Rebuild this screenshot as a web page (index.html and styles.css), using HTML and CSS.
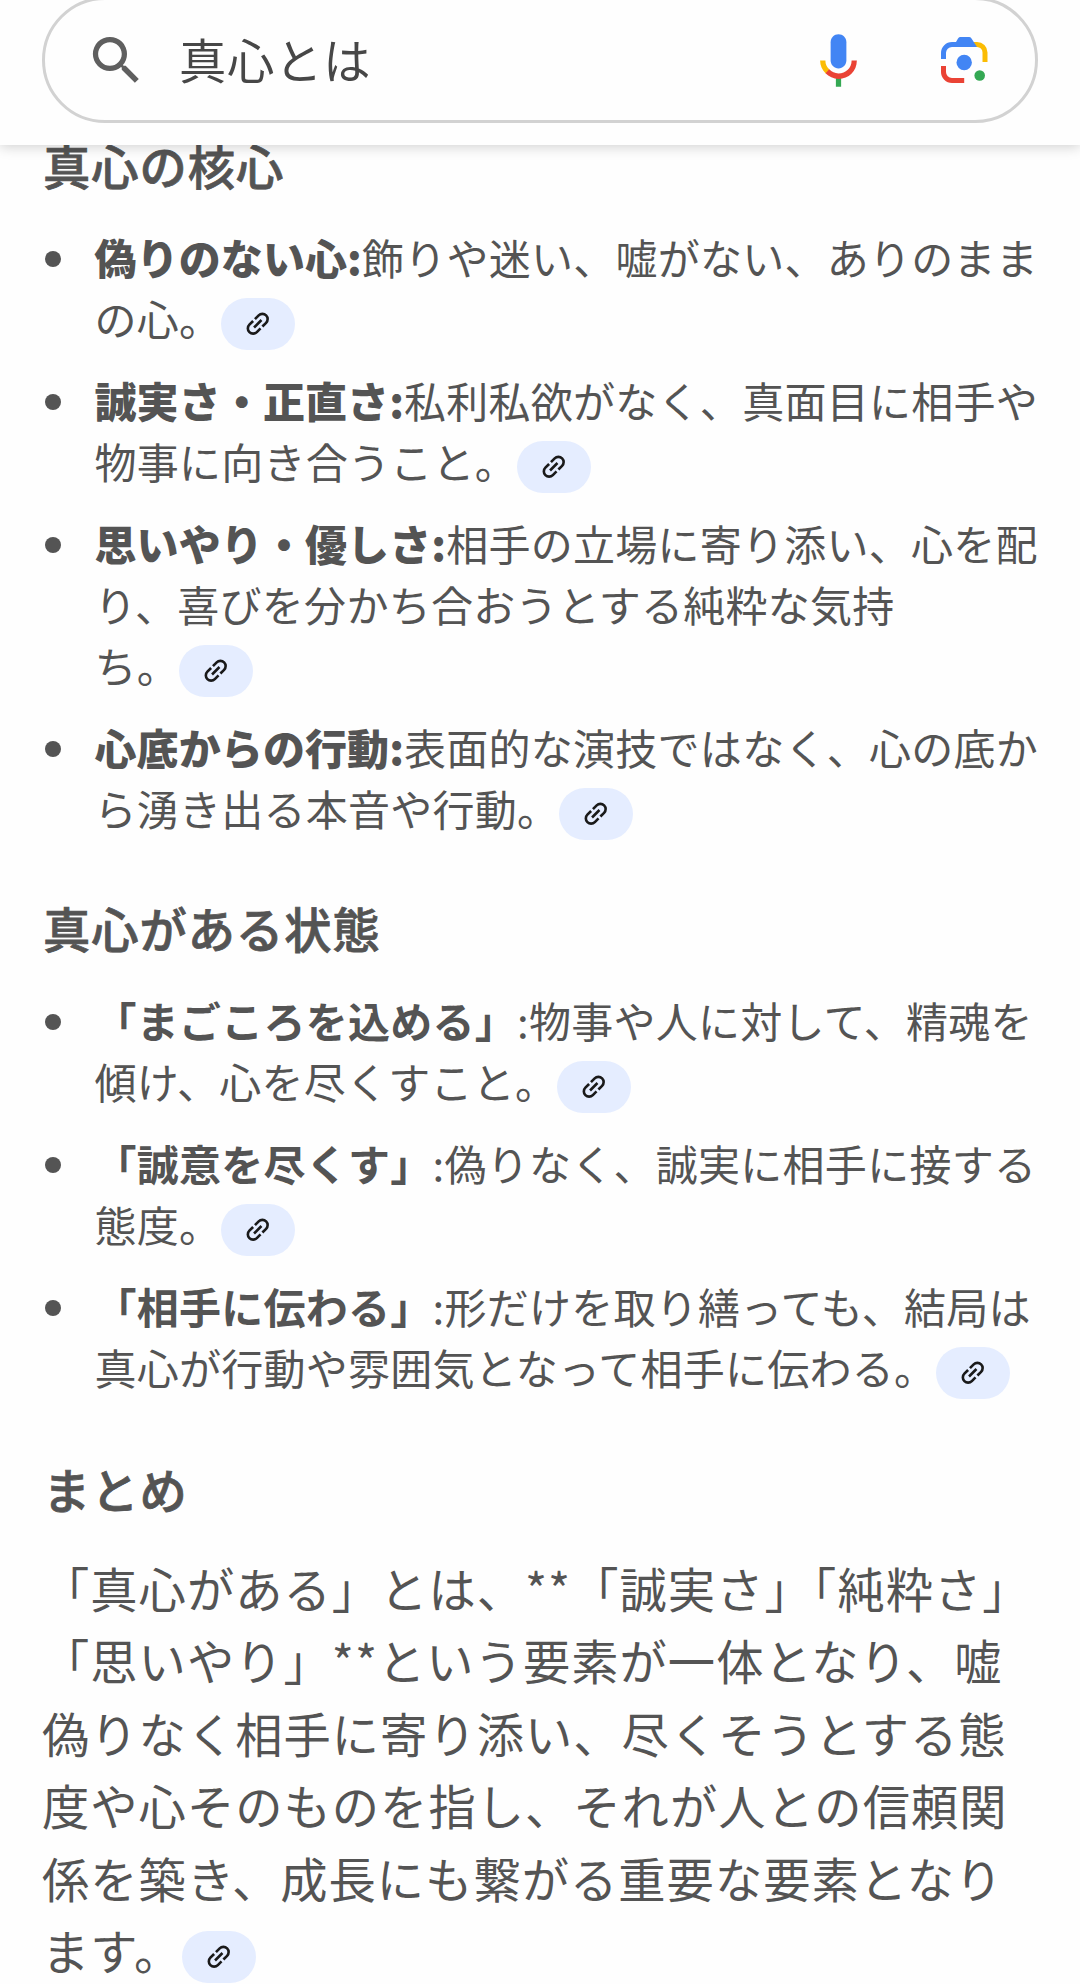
FILE: index.html
```html
<!DOCTYPE html>
<html lang="ja">
<head>
    <meta charset="UTF-8">
    <meta name="viewport" content="width=device-width, initial-scale=1.0">
    <title>真心とは</title>
    <link rel="stylesheet" href="styles.css">
</head>
<body>

<!-- shared link icon -->
<svg class="defs" width="0" height="0">
    <symbol id="link" viewBox="0 0 24 24">
        <path transform="rotate(-45 12 12)" d="M11 17H7q-2.075 0-3.537-1.463T2 12t1.463-3.537T7 7h4v2H7q-1.25 0-2.125.875T4 12t.875 2.125T7 15h4zm-3-4v-2h8v2zm5 4v-2h4q1.25 0 2.125-.875T20 12t-.875-2.125T17 9h-4V7h4q2.075 0 3.538 1.463T22 12t-1.463 3.538T17 17z"/>
    </symbol>
</svg>

<header class="header">
    <div class="search-box">
        <svg class="icon" viewBox="0 0 24 24" fill="#5f5f5f">
            <path d="M15.5 14h-.79l-.28-.27A6.47 6.47 0 0 0 16 9.5 6.5 6.5 0 1 0 9.5 16c1.61 0 3.09-.59 4.23-1.57l.27.28v.79l5 4.99L20.49 19l-4.99-5zm-6 0C7.01 14 5 11.99 5 9.5S7.01 5 9.5 5 14 7.01 14 9.5 11.99 14 9.5 14z"/>
        </svg>
        <span class="query">真心とは</span>
        <svg class="icon mic" viewBox="0 0 24 24">
            <path fill="#4285f4" d="M12 15c1.66 0 3-1.31 3-2.97V5.01C15 3.35 13.66 2 12 2S9 3.34 9 5.01v7.02C9 13.69 10.34 15 12 15z"/>
            <path fill="#34a853" d="M11 18.08h2V22h-2z"/>
            <path fill="#fbbc04" d="M7.05 16.87C5.78 15.54 5 14.04 5 12h2c0 1.45.56 2.42 1.47 3.38v.32l-1.15 1.18z"/>
            <path fill="#ea4335" d="M12 16.93a4.97 5.25 0 0 1-3.54-1.55l-1.41 1.49C8.31 18.21 10.07 19 12 19c3.87 0 6.99-2.92 6.99-7H17c0 2.92-2.24 4.93-5 4.93z"/>
        </svg>
        <svg class="lens" viewBox="0 0 47 46">
            <path fill="#fbbc04" d="M31 5h5a10.5 10.5 0 0 1 10.5 10.5V25h-5v-9.500a5.500 5.500 0 0 0-5.500-5.500h-1z"/>
            <path fill="#4285f4" d="M0 22v-6A11 11 0 0 1 11 5h4l2-3.600Q18 0 19.500 0h8.500q1.500 0 2.500 1.400L36 10H11a6 6 0 0 0-6 6v6z"/>
            <path fill="#ea4335" d="M0 29h5v6a6 6 0 0 0 6 6h12.200v5H11A11 11 0 0 1 0 35z"/>
            <circle cx="23.200" cy="25.500" r="7.700" fill="#4285f4"/>
            <circle cx="38.700" cy="38.500" r="5.300" fill="#34a853"/>
        </svg>
    </div>
</header>

<main class="content">
    <h2>真心の核心</h2>
    <ul class="core">
        <li><b>偽りのない心:</b>飾りや迷い、嘘がない、ありのまま<br>の心。<a class="chip"><svg><use href="#link"/></svg></a></li>
        <li><b>誠実さ・正直さ:</b>私利私欲がなく、真面目に相手や<br>物事に向き合うこと。<a class="chip"><svg><use href="#link"/></svg></a></li>
        <li><b>思いやり・優しさ:</b>相手の立場に寄り添い、心を配<br>り、喜びを分かち合おうとする純粋な気持<br>ち。<a class="chip"><svg><use href="#link"/></svg></a></li>
        <li><b>心底からの行動:</b>表面的な演技ではなく、心の底か<br>ら湧き出る本音や行動。<a class="chip"><svg><use href="#link"/></svg></a></li>
    </ul>

    <h2>真心がある状態</h2>
    <ul>
        <li><b>「まごころを込める」</b>:物事や人に対して、精魂を<br>傾け、心を尽くすこと。<a class="chip"><svg><use href="#link"/></svg></a></li>
        <li><b>「誠意を尽くす」</b>:偽りなく、誠実に相手に接する<br>態度。<a class="chip"><svg><use href="#link"/></svg></a></li>
        <li><b>「相手に伝わる」</b>:形だけを取り繕っても、結局は<br>真心が行動や雰囲気となって相手に伝わる。<a class="chip"><svg><use href="#link"/></svg></a></li>
    </ul>

    <h2 class="summary">まとめ</h2>
    <p>「真心がある」とは、**「誠実さ」「純粋さ」<br>「思いやり」**という要素が一体となり、嘘<br>偽りなく相手に寄り添い、尽くそうとする態<br>度や心そのものを指し、それが人との信頼関<br>係を築き、成長にも繋がる重要な要素となり<br>ます。<a class="chip"><svg><use href="#link"/></svg></a></p>
</main>

</body>
</html>
```
FILE: styles.css
```css
body {
    margin: 0;
    height: 1984px;
    overflow: hidden;
    background: #fefefe;
    color: #545454;
    font-family: "Noto Sans CJK JP", sans-serif;
}
.defs {
    position: absolute;
}
.header {
    position: fixed;
    top: 0;
    left: 0;
    right: 0;
    height: 145px;
    padding: 0 42px;
    background: #fefefe;
    box-shadow: 0 2px 12px rgba(0, 0, 0, 0.18);
    z-index: 1;
}
.search-box {
    display: flex;
    align-items: center;
    box-sizing: border-box;
    height: 126px;
    margin-top: -3px;
    padding: 0 47px 0 40px;
    border: 3px solid #d2d2d2;
    border-radius: 63px;
}
.icon {
    width: 63px;
    height: 63px;
}
.query {
    flex: 1;
    margin: -3px 0 0 31px;
    font-size: 47.25px;
    line-height: 68px;
    letter-spacing: 0.8px;
    color: #474747;
}
.mic {
    margin-right: 71px;
}
.lens {
    width: 47px;
    height: 46px;
}
.content {
    padding: 131px 42px 0;
    white-space: nowrap;
}
h2 {
    margin: 0 0 27px;
    padding-left: 1px;
    font-size: 47.25px;
    font-weight: 500;
    line-height: 68px;
    letter-spacing: 1px;
    -webkit-text-stroke: 0.8px #545454;
}
.summary {
    margin: 58px 0 29px;
}
ul {
    margin: 0 0 56px;
    padding: 0;
    list-style: none;
}
li {
    position: relative;
    margin-bottom: 21px;
    padding-left: 52.5px;
    font-size: 42px;
    line-height: 61px;
    letter-spacing: 0.26px;
}
li:last-child {
    margin-bottom: 0;
}
li::before {
    content: "";
    position: absolute;
    left: 3px;
    top: 25px;
    width: 16px;
    height: 16px;
    border-radius: 50%;
    background: #545454;
}
.core b {
    font-weight: 900;
    letter-spacing: 0.1px;
}
p {
    margin: 0;
    font-size: 47.25px;
    line-height: 72.4px;
    letter-spacing: 1.05px;
}
.chip {
    display: inline-flex;
    align-items: center;
    justify-content: center;
    box-sizing: border-box;
    width: 74px;
    height: 52px;
    margin-bottom: -5px;
    padding-right: 1px;
    border-radius: 26px;
    background: #e5edff;
    vertical-align: -3.5px;
}
p .chip {
    vertical-align: -2.5px;
}
.chip svg {
    width: 31.5px;
    height: 31.5px;
    fill: #1a1a1a;
}
```
